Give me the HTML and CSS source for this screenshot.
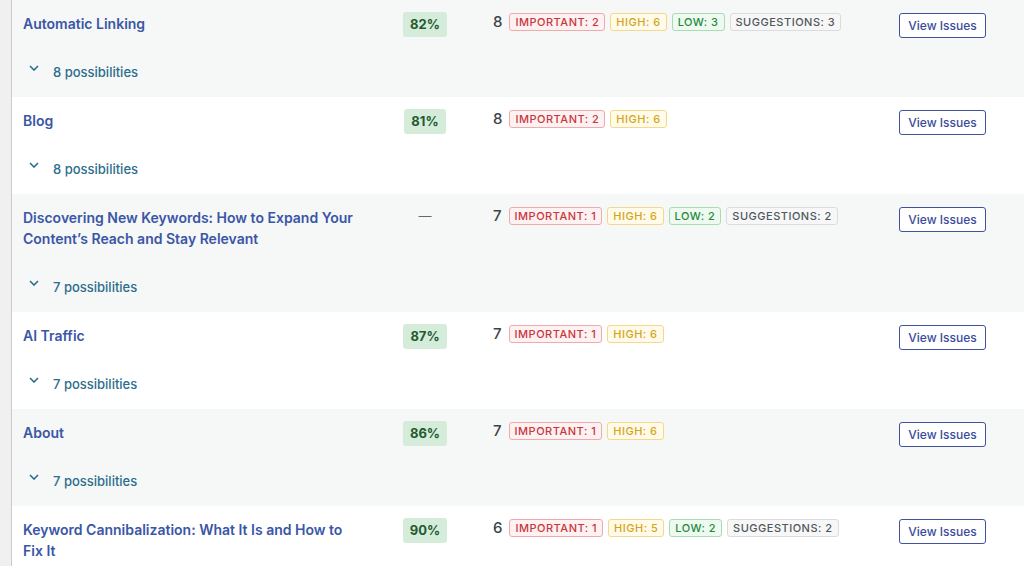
FILE: index.html
```html
<!DOCTYPE html>
<html lang="en">
<head>
<meta charset="utf-8">
<title>Issues</title>
<link rel="stylesheet" href="styles.css">
</head>
<body>
<div class="wrap">
  <div class="table">
    <div class="row odd">
      <div class="c-title">
        <a class="title" href="#">Automatic Linking</a>
        <button class="toggle"><svg class="chev" viewBox="0 0 10 6" width="10" height="6"><path d="M1 1l4 4 4-4" fill="none" stroke="currentColor" stroke-width="1.6"/></svg><span>8 possibilities</span></button>
      </div>
      <div class="c-score"><span class="score">82%</span></div>
      <div class="c-issues"><span class="count">8</span><span class="badge imp">IMPORTANT: 2</span><span class="badge high">HIGH: 6</span><span class="badge low">LOW: 3</span><span class="badge sug">SUGGESTIONS: 3</span></div>
      <div class="c-action"><button class="view">View Issues</button></div>
    </div>
    <div class="row">
      <div class="c-title">
        <a class="title" href="#">Blog</a>
        <button class="toggle"><svg class="chev" viewBox="0 0 10 6" width="10" height="6"><path d="M1 1l4 4 4-4" fill="none" stroke="currentColor" stroke-width="1.6"/></svg><span>8 possibilities</span></button>
      </div>
      <div class="c-score"><span class="score">81%</span></div>
      <div class="c-issues"><span class="count">8</span><span class="badge imp">IMPORTANT: 2</span><span class="badge high">HIGH: 6</span></div>
      <div class="c-action"><button class="view">View Issues</button></div>
    </div>
    <div class="row odd">
      <div class="c-title">
        <a class="title" href="#">Discovering New Keywords: How to Expand Your Content’s Reach and Stay Relevant</a>
        <button class="toggle"><svg class="chev" viewBox="0 0 10 6" width="10" height="6"><path d="M1 1l4 4 4-4" fill="none" stroke="currentColor" stroke-width="1.6"/></svg><span>7 possibilities</span></button>
      </div>
      <div class="c-score"><span class="dash">—</span></div>
      <div class="c-issues"><span class="count">7</span><span class="badge imp">IMPORTANT: 1</span><span class="badge high">HIGH: 6</span><span class="badge low">LOW: 2</span><span class="badge sug">SUGGESTIONS: 2</span></div>
      <div class="c-action"><button class="view">View Issues</button></div>
    </div>
    <div class="row">
      <div class="c-title">
        <a class="title" href="#">AI Traffic</a>
        <button class="toggle"><svg class="chev" viewBox="0 0 10 6" width="10" height="6"><path d="M1 1l4 4 4-4" fill="none" stroke="currentColor" stroke-width="1.6"/></svg><span>7 possibilities</span></button>
      </div>
      <div class="c-score"><span class="score">87%</span></div>
      <div class="c-issues"><span class="count">7</span><span class="badge imp">IMPORTANT: 1</span><span class="badge high">HIGH: 6</span></div>
      <div class="c-action"><button class="view">View Issues</button></div>
    </div>
    <div class="row odd">
      <div class="c-title">
        <a class="title" href="#">About</a>
        <button class="toggle"><svg class="chev" viewBox="0 0 10 6" width="10" height="6"><path d="M1 1l4 4 4-4" fill="none" stroke="currentColor" stroke-width="1.6"/></svg><span>7 possibilities</span></button>
      </div>
      <div class="c-score"><span class="score">86%</span></div>
      <div class="c-issues"><span class="count">7</span><span class="badge imp">IMPORTANT: 1</span><span class="badge high">HIGH: 6</span></div>
      <div class="c-action"><button class="view">View Issues</button></div>
    </div>
    <div class="row">
      <div class="c-title">
        <a class="title" href="#">Keyword Cannibalization: What It Is and How to Fix It</a>
        <button class="toggle"><svg class="chev" viewBox="0 0 10 6" width="10" height="6"><path d="M1 1l4 4 4-4" fill="none" stroke="currentColor" stroke-width="1.6"/></svg><span>6 possibilities</span></button>
      </div>
      <div class="c-score"><span class="score">90%</span></div>
      <div class="c-issues"><span class="count">6</span><span class="badge imp">IMPORTANT: 1</span><span class="badge high">HIGH: 5</span><span class="badge low">LOW: 2</span><span class="badge sug">SUGGESTIONS: 2</span></div>
      <div class="c-action"><button class="view">View Issues</button></div>
    </div>
  </div>
</div>
</body>
</html>
```
FILE: styles.css
```css
* { box-sizing: border-box; }
html, body { margin: 0; padding: 0; }
body {
  background: #f0f0f1;
  font-family: Inter, "Noto Sans", "Liberation Sans", sans-serif;
  color: #3c434a;
  overflow: hidden;
}
.wrap {
  margin-left: 11px;
  border-left: 1px solid #c9cacd;
  min-height: 566px;
}
.row {
  display: grid;
  grid-template-columns: 367px 70px 439px 1fr;
  padding: 13px 0 15px 11px;
  background: #ffffff;
}
.row.odd { background: #f6f7f7; }
.c-title { display: flex; flex-direction: column; align-items: flex-start; }
.title {
  font-size: 14px;
  line-height: 21px;
  font-weight: 600;
  color: #3a56a6;
  text-decoration: none;
  max-width: 334px;
}
.toggle {
  margin-top: 28px;
  border: 0;
  background: none;
  padding: 0;
  display: flex;
  align-items: center;
  gap: 14px;
  font-family: inherit;
  font-size: 13px;
  line-height: 20px;
  color: #2b6d8c;
  font-weight: 500;
}
.chev { margin-left: 6px; margin-top: -8px; color: #2b6d8c; }
.c-score { display: flex; justify-content: center; margin-top: -1px; }
.score {
  display: inline-block;
  height: 25px;
  line-height: 25px;
  padding: 0 7px;
  border-radius: 3px;
  background: #d6ecda;
  color: #1f5a30;
  font-weight: 700;
  font-size: 13px;
}
.dash {
  line-height: 21px;
  font-size: 13px;
  color: #646970;
}
.c-issues {
  display: flex;
  align-items: flex-start;
  padding-left: 33px;
}
.count {
  font-size: 15px;
  font-weight: 500;
  line-height: 18px;
  color: #3c434a;
  margin-right: 7px;
}
.badge {
  display: inline-block;
  height: 18px;
  line-height: 16px;
  padding: 0 5px;
  margin-right: 5px;
  border: 1px solid;
  border-radius: 3px;
  font-size: 11px;
  font-weight: 500;
  letter-spacing: 0.5px;
}
.badge.imp { color: #c8373f; background: #fdf1f1; border-color: #f0aaae; }
.badge.high { color: #d2a41d; background: #fffbe8; border-color: #f2d98e; }
.badge.low { color: #1f8a3c; background: #eef9f0; border-color: #a9dcb5; }
.badge.sug { color: #50575e; background: #f7f7f7; border-color: #dcdcde; }
.c-action { padding-top: 0; }
.view {
  height: 25px;
  width: 87px;
  padding: 0;
  border: 1px solid #4051a0;
  border-radius: 3px;
  background: #ffffff;
  color: #3b4c9c;
  font-family: inherit;
  font-size: 12px;
  font-weight: 500;
}
```
